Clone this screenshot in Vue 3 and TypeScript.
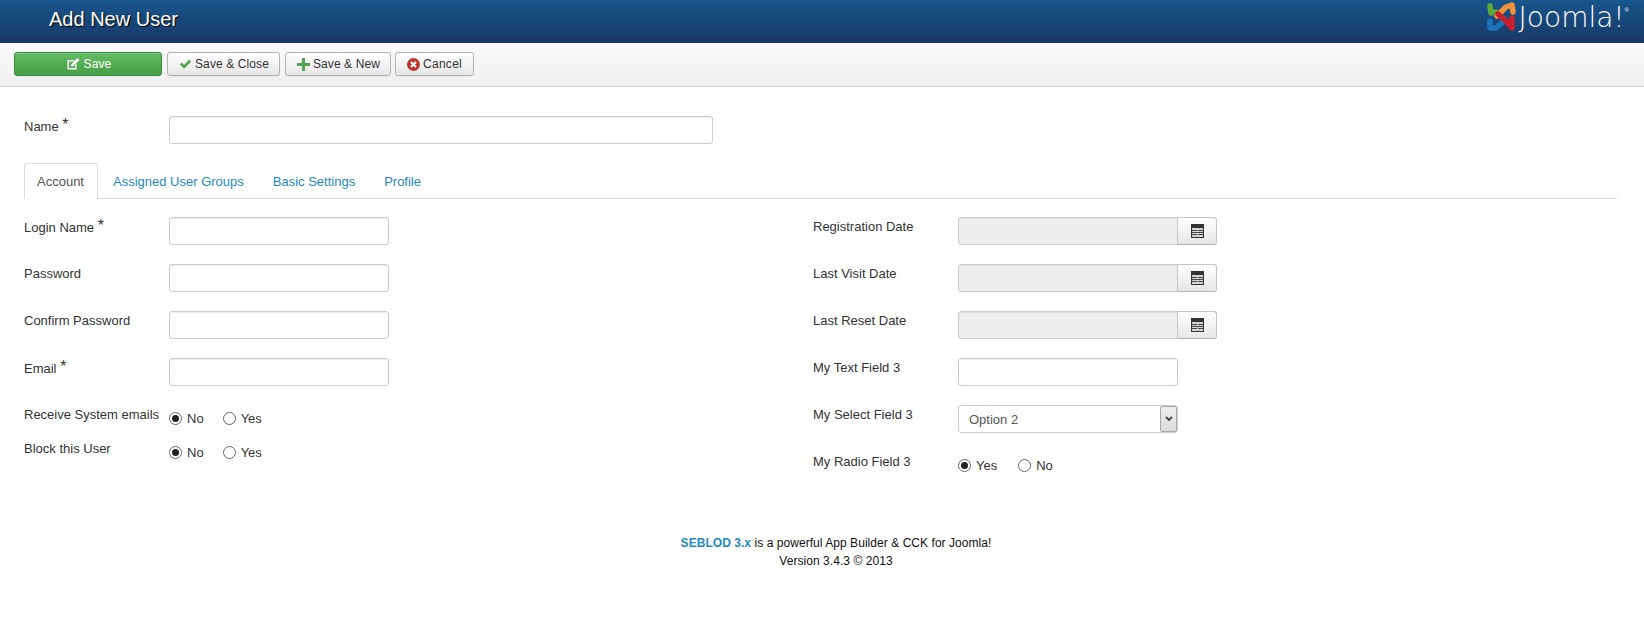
<script setup lang="ts">
interface Field { label: string; req?: boolean }
const leftInputs: Field[] = [
  { label: 'Login Name', req: true },
  { label: 'Password' },
  { label: 'Confirm Password' },
  { label: 'Email', req: true },
]
const dates: string[] = ['Registration Date', 'Last Visit Date', 'Last Reset Date']
const tabs: string[] = ['Assigned User Groups', 'Basic Settings', 'Profile']
</script>

<template>
  <div class="page">
    <header class="header">
      <h1 class="title">Add New User</h1>
      <div class="logo">
        <svg class="mark" width="32" height="32" viewBox="0 0 32 32" fill="none" stroke-width="5.500" stroke-linecap="round" stroke-linejoin="round">
          <path d="M4 20 L4 27 L10 27 L19 19" stroke="#1c74b8" />
          <path d="M4 5 L5 12 L10 11 L18 18" stroke="#5fa83a" />
          <path d="M27 11 L26 4 L20 6 L11 15" stroke="#f0923a" />
          <path d="M12 13 L20 20 L26 27 L26 17" stroke="#c8202f" />
        </svg>
        <span class="word">Joomla!</span><sup class="reg">®</sup>
      </div>
    </header>

    <nav class="toolbar">
      <button class="btn success" type="button">
        <svg class="ico" width="14" height="13" viewBox="0 0 14 13"><path d="M1.500 2h7L7 3.500H3V10h6V7l1.500-1.500V11.500H1.500z" fill="#fff" /><path d="M5 6.500 11.500 0 13.500 2 7 8.500H5z" fill="#fff" /></svg>
        Save
      </button>
      <button class="btn" type="button">
        <svg class="ico" width="13" height="12" viewBox="0 0 14 12"><path d="M1 6.500 3 4.500 5.500 7 11 1.200 13.200 3.300 5.500 11z" fill="#51a351" /></svg>
        Save &amp; Close
      </button>
      <button class="btn" type="button">
        <svg class="ico" width="13" height="13" viewBox="0 0 13 13"><path d="M5 0h3v5h5v3H8v5H5V8H0V5h5z" fill="#51a351" /></svg>
        Save &amp; New
      </button>
      <button class="btn cancel" type="button">
        <svg class="ico" width="13" height="13" viewBox="0 0 13 13"><circle cx="6.500" cy="6.500" r="6.500" fill="#bd362f" /><path d="M4 4l5 5M9 4l-5 5" stroke="#fff" stroke-width="2" /></svg>
        Cancel
      </button>
    </nav>

    <main class="content">
      <div class="name-row">
        <label class="label">Name <span class="star">*</span></label>
        <input class="input wide" type="text" />
      </div>

      <ul class="tabs">
        <li class="tab active">Account</li>
        <li v-for="t in tabs" :key="t" class="tab">{{ t }}</li>
      </ul>

      <div class="columns">
        <section class="col">
          <div v-for="f in leftInputs" :key="f.label" class="row">
            <label class="label">{{ f.label }}<template v-if="f.req">&nbsp;<span class="star">*</span></template></label>
            <input class="input" type="text" />
          </div>
          <div class="radio-row first">
            <label class="label">Receive System emails</label>
            <div class="radios">
              <span class="radio on"></span><span class="opt">No</span>
              <span class="radio"></span><span class="opt">Yes</span>
            </div>
          </div>
          <div class="radio-row">
            <label class="label">Block this User</label>
            <div class="radios">
              <span class="radio on"></span><span class="opt">No</span>
              <span class="radio"></span><span class="opt">Yes</span>
            </div>
          </div>
        </section>

        <section class="col">
          <div v-for="d in dates" :key="d" class="row">
            <label class="label">{{ d }}</label>
            <div class="date">
              <input class="input disabled" type="text" disabled />
              <button class="cal" type="button">
                <svg width="13" height="14" viewBox="0 0 13 14"><path d="M0 0h13v14H0z" fill="#333" /><path d="M1 4h11v9H1z" fill="#d4d4d4" /><path d="M1 6h5v1H1zM7 6h5v1H7zM1 8h11v1H1zM1 10h5v1H1zM7 10h5v1H7z" fill="#444" /></svg>
              </button>
            </div>
          </div>
          <div class="row">
            <label class="label">My Text Field 3</label>
            <input class="input" type="text" />
          </div>
          <div class="row">
            <label class="label">My Select Field 3</label>
            <div class="select">
              <span class="sel-text">Option 2</span>
              <span class="sel-arrow">
                <svg width="8" height="6" viewBox="0 0 8 6"><path d="M1 1l3 3 3-3" fill="none" stroke="#444" stroke-width="1.800" /></svg>
              </span>
            </div>
          </div>
          <div class="radio-row last">
            <label class="label">My Radio Field 3</label>
            <div class="radios">
              <span class="radio on"></span><span class="opt">Yes</span>
              <span class="radio"></span><span class="opt">No</span>
            </div>
          </div>
        </section>
      </div>
    </main>

    <footer class="footer">
      <p><a class="brand">SEBLOD 3.x</a> is a powerful App Builder &amp; CCK for Joomla!</p>
      <p>Version 3.4.3 © 2013</p>
    </footer>
  </div>
</template>

<style>
html, body { margin: 0; background: #fff; }
</style>

<style scoped>
.page {
  width: 1644px;
  height: 625px;
  overflow: hidden;
  font-family: "Liberation Sans", Arial, sans-serif;
  font-size: 13px;
  color: #333;
  background: #fff;
}
.header {
  height: 43px;
  background: linear-gradient(to bottom, #17568c, #1a3867);
  display: flex;
  justify-content: space-between;
  padding-left: 49px;
  box-sizing: border-box;
}
.title {
  margin: 0;
  font-size: 20px;
  font-weight: 400;
  line-height: 39px;
  color: #fff;
  text-shadow: 1px 1px 1px #000;
}
.logo {
  display: flex;
  align-items: flex-start;
  padding: 1px 15px 0 0;
}
.mark { margin-right: 1px; }
.word {
  font-family: "DejaVu Sans", "Open Sans", sans-serif;
  font-weight: 200;
  font-size: 28px;
  line-height: 34px;
  color: #fff;
}
.reg { font-size: 6px; line-height: 10px; color: #fff; margin-top: 4px; }
.toolbar {
  height: 44px;
  box-sizing: border-box;
  padding: 9px 14px 0;
  display: flex;
  gap: 5px;
  background: linear-gradient(to bottom, #fafafa, #f0f0f0);
  border-bottom: 1px solid #d4d4d4;
}
.btn {
  height: 24px;
  padding: 0 10px 0 11px;
  display: flex;
  align-items: center;
  justify-content: center;
  gap: 3px;
  font: 12px "Liberation Sans", Arial, sans-serif;
  letter-spacing: .1px;
  color: #333;
  border: 1px solid #b3b3b3;
  border-radius: 3px;
  background: linear-gradient(to bottom, #fff, #e6e6e6);
  box-shadow: inset 0 1px 0 rgba(255,255,255,.2), 0 1px 2px rgba(0,0,0,.05);
}
.cancel { letter-spacing: .3px; padding-right: 11px; margin-left: -1px; }
.success {
  width: 148px;
  gap: 4px;
  color: #fff;
  background: linear-gradient(to bottom, #62bd62, #469d46);
  border-color: #3d8b3d;
}
.content { padding: 29px 0 0 24px; }
.name-row { display: flex; align-items: flex-start; height: 47px; }
.label {
  display: block;
  width: 145px;
  flex: none;
  padding-top: 1px;
  line-height: 18px;
  color: #333;
  white-space: nowrap;
}
.star { font-size: 16px; position: relative; top: -1px; }
.input {
  display: block;
  box-sizing: border-box;
  width: 220px;
  height: 28px;
  margin: 0;
  border: 1px solid #ccc;
  border-radius: 3px;
  background: #fff;
  box-shadow: inset 0 1px 1px rgba(0,0,0,.075);
}
.wide { width: 544px; }
.tabs {
  list-style: none;
  margin: 0;
  padding: 0;
  width: 1593px;
  height: 35px;
  display: flex;
  border-bottom: 1px solid #ddd;
}
.tab {
  box-sizing: border-box;
  height: 36px;
  padding: 9px 13px 0 14px;
  color: #1f8ac0;
  line-height: 18px;
  border: 1px solid transparent;
  border-radius: 3px 3px 0 0;
  white-space: nowrap;
}
.tab.active {
  padding: 9px 13px 0 12px;
  color: #555;
  background: #fff;
  border-color: #ddd #ddd transparent;
}
.columns { display: flex; padding-top: 18px; }
.col { width: 789px; flex: none; }
.row { display: flex; align-items: flex-start; height: 47px; }
.date { display: flex; }
.date .input { border-radius: 3px 0 0 3px; }
.disabled { background: #eee; cursor: not-allowed; }
.cal {
  width: 40px;
  height: 28px;
  margin-left: -1px;
  padding: 0;
  display: flex;
  align-items: center;
  justify-content: center;
  border: 1px solid #c5c5c5;
  border-bottom-color: #b3b3b3;
  border-radius: 0 3px 3px 0;
  background: linear-gradient(to bottom, #fff, #e6e6e6);
}
.select {
  box-sizing: border-box;
  width: 220px;
  height: 28px;
  display: flex;
  justify-content: space-between;
  border: 1px solid #ccc;
  border-radius: 3px;
  background: #fff;
}
.sel-text { padding-left: 10px; line-height: 27px; color: #555; }
.sel-arrow {
  width: 17px;
  margin: 0;
  display: flex;
  align-items: center;
  justify-content: center;
  background: linear-gradient(to bottom, #eee, #dcdcdc);
  border: 1px solid #a8a8a8;
  border-radius: 2px;
  box-sizing: border-box;
}
.radio-row { display: flex; align-items: flex-start; height: 33px; }
.radio-row.first { height: 34px; }
.radio-row.last { height: 30px; }
.radios {
  display: flex;
  align-items: center;
  height: 18px;
  padding-top: 4px;
}
.radio {
  box-sizing: border-box;
  width: 13px;
  height: 13px;
  border: 1px solid #666;
  border-radius: 50%;
  background: #fff;
  position: relative;
}
.radio.on::after {
  content: "";
  position: absolute;
  left: 2px;
  top: 2px;
  width: 7px;
  height: 7px;
  border-radius: 50%;
  background: #222;
}
.opt { margin: 0 19px 0 5px; }
.radio-row.last .opt { margin-right: 21px; }
.footer {
  margin-top: 52px;
  padding-left: 28px;
  text-align: center;
  font-size: 12px;
  letter-spacing: .05px;
  color: #111;
  line-height: 18px;
}
.footer p { margin: 0; }
.brand { color: #1f8ac0; font-weight: 700; }
</style>
